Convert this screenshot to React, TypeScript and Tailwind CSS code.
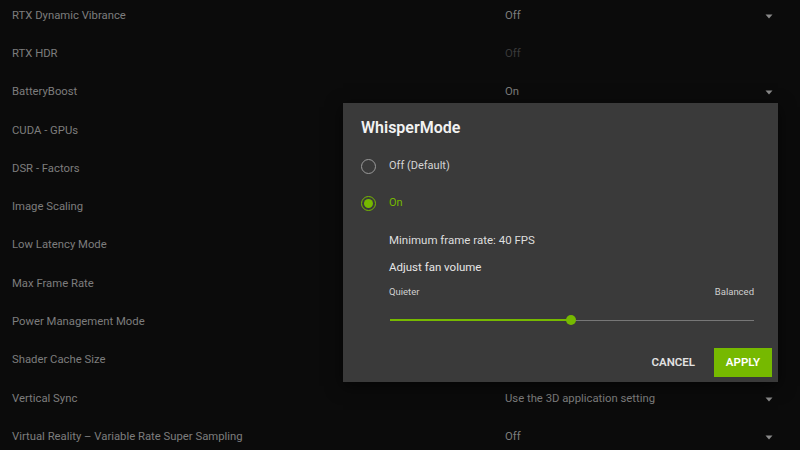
import React from 'react'

interface Setting {
    label: string
    value: string
    disabled?: boolean
}

// rows 4-10 sit behind the dialog, their values are not visible
const settings: Setting[] = [
    { label: 'RTX Dynamic Vibrance', value: 'Off' },
    { label: 'RTX HDR', value: 'Off', disabled: true },
    { label: 'BatteryBoost', value: 'On' },
    { label: 'CUDA - GPUs', value: '' },
    { label: 'DSR - Factors', value: '' },
    { label: 'Image Scaling', value: '' },
    { label: 'Low Latency Mode', value: '' },
    { label: 'Max Frame Rate', value: '' },
    { label: 'Power Management Mode', value: '' },
    { label: 'Shader Cache Size', value: '' },
    { label: 'Vertical Sync', value: 'Use the 3D application setting' },
    { label: 'Virtual Reality – Variable Rate Super Sampling', value: 'Off' },
]

function Chevron() {
    return (
        <svg width="8" height="5" viewBox="0 0 8 5" className="shrink-0">
            <path d="M0.5 0.5 L7.5 0.5 L4 4.5 Z" fill="#8a8a8a" />
        </svg>
    )
}

function Radio({ checked }: { checked?: boolean }) {
    return checked ? (
        <span className="w-[15px] h-[15px] rounded-full border-[1.5px] border-[#76b900] flex items-center justify-center shrink-0">
            <span className="w-[9px] h-[9px] rounded-full bg-[#76b900]" />
        </span>
    ) : (
        <span className="w-[15px] h-[15px] rounded-full border-[1.5px] border-[#9a9a9a] shrink-0" />
    )
}

export default function App() {
    return (
        <div
            className="relative w-[800px] h-[450px] overflow-hidden bg-[#0b0b0b] text-[11.3px]"
            style={{ fontFamily: 'Roboto, "Liberation Sans", sans-serif' }}
        >
            {/* Settings list */}
            <div className="flex flex-col -mt-[3px]">
                {settings.map((s) => (
                    <div key={s.label} className="h-[38.3px] flex items-center pl-3 pr-[27px]">
                        <span className="w-[493px] text-[#7d7d7d]">{s.label}</span>
                        <span className={`flex-1 ${s.disabled ? 'text-[#3a3a3a]' : 'text-[#7d7d7d]'}`}>{s.value}</span>
                        {!s.disabled && s.value && <Chevron />}
                    </div>
                ))}
            </div>

            {/* Dialog */}
            <div className="absolute left-[343px] top-[103px] w-[435px] h-[279px] bg-[#3a3a3a] shadow-[0_4px_16px_rgba(0,0,0,0.6)] flex flex-col pt-[15px] pl-[18px] pr-[6px]">
                <h2 className="h-[20px] leading-[20px] text-[16px] font-semibold text-[#f2f2f2]">WhisperMode</h2>

                <div className="mt-[18px] h-[20px] flex items-center gap-[13px] text-[11px] text-[#d4d4d4]">
                    <Radio />
                    <span>Off (Default)</span>
                </div>
                <div className="mt-[17px] h-[20px] flex items-center gap-[13px] text-[11px] text-[#76b900]">
                    <Radio checked />
                    <span>On</span>
                </div>

                <div className="pl-[28px] pr-[18px] flex flex-col">
                    <div className="mt-[19px] h-[16px] leading-[16px] text-[11.5px] text-[#dedede]">Minimum frame rate: 40 FPS</div>
                    <div className="mt-[11px] h-[16px] leading-[16px] text-[11.5px] text-[#e6e6e6]">Adjust fan volume</div>
                    <div className="mt-[11px] h-[12px] leading-[12px] text-[9.5px] text-[#cfcfcf] flex justify-between">
                        <span>Quieter</span>
                        <span>Balanced</span>
                    </div>
                    <div className="mt-[16px] h-[12px] relative flex items-center pl-[1px]">
                        <div className="h-[2px] w-[181px] bg-[#76b900]" />
                        <div className="h-[1px] flex-1 bg-[#777777]" />
                        <span className="absolute left-[177px] top-[1px] w-[10px] h-[10px] rounded-full bg-[#76b900]" />
                    </div>
                </div>

                <div className="mt-[22px] flex items-center justify-end gap-[19px]">
                    <button className="text-[11.5px] font-semibold text-[#e2e2e2]">CANCEL</button>
                    <button className="w-[58px] h-[29px] bg-[#76b900] text-white text-[11.5px] font-semibold">
                        APPLY
                    </button>
                </div>
            </div>
        </div>
    )
}
